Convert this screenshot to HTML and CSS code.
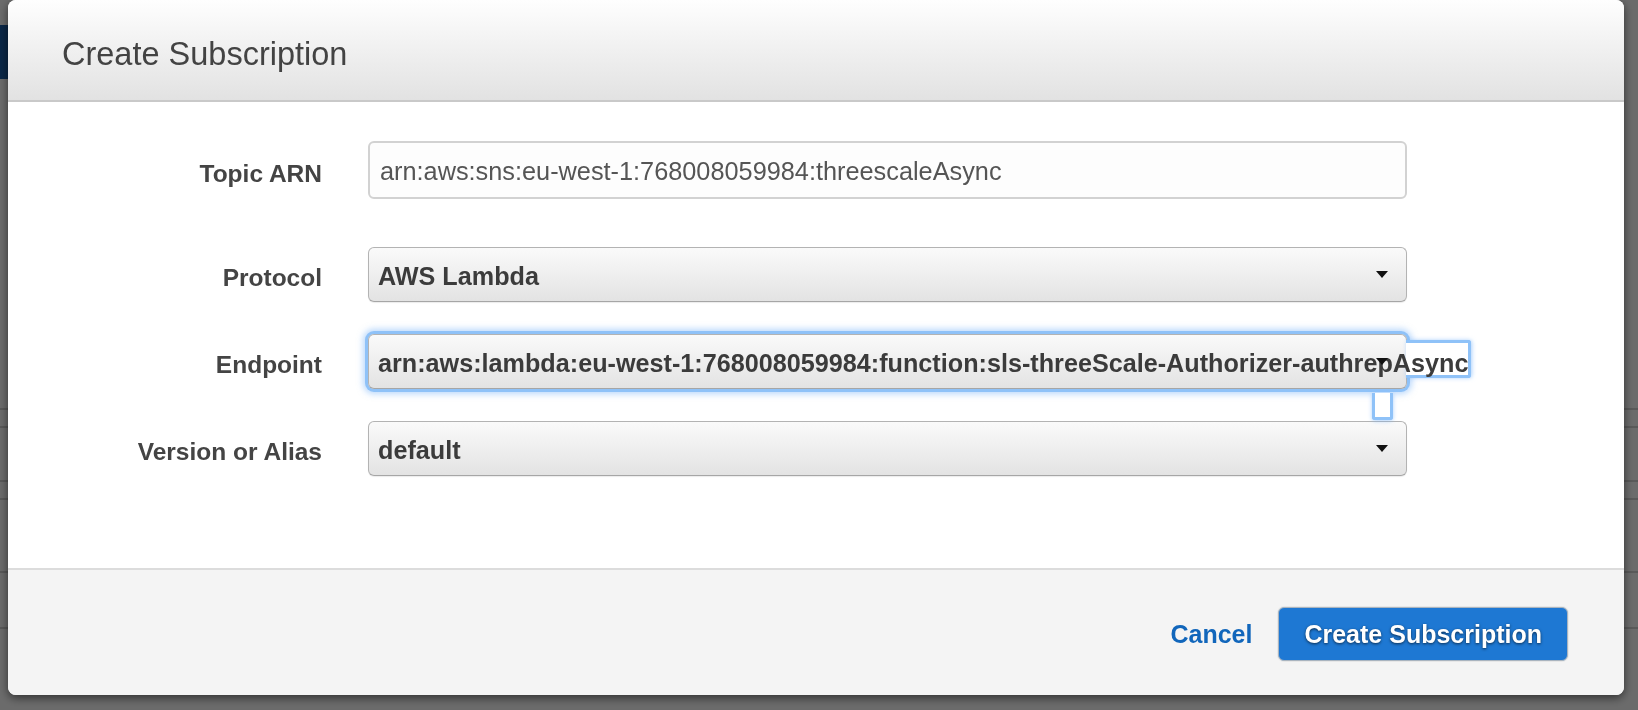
FILE: index.html
```html
<!DOCTYPE html>
<html>
<head>
<meta charset="utf-8">
<title>Create Subscription</title>
<link rel="stylesheet" href="styles.css">
</head>
<body>
<div class="page">
  <div class="page-bar"></div>
  <div class="page-line l1"></div>
  <div class="page-line l2"></div>
  <div class="page-line l3"></div>
  <div class="page-line l4"></div>
  <div class="page-line l5"></div>
  <div class="page-line l6"></div>
</div>
<div class="overlay"></div>
<div class="modal">
  <div class="modal-header">
    <h1 class="modal-title">Create Subscription</h1>
  </div>
  <div class="modal-body">
    <div class="row row-topic">
      <div class="label">Topic ARN</div>
      <div class="input">arn:aws:sns:eu-west-1:768008059984:threescaleAsync</div>
    </div>
    <div class="row row-protocol">
      <div class="label">Protocol</div>
      <div class="select"><span class="select-text">AWS Lambda</span><span class="caret"></span></div>
    </div>
    <div class="row row-endpoint">
      <div class="label">Endpoint</div>
      <div class="select focused"><span class="select-text">arn:aws:lambda:eu-west-1:768008059984:function:sls-threeScale-Authorizer-authrepAsync</span><span class="caret"></span><span class="spill"></span><span class="tab"></span></div>
    </div>
    <div class="row row-version">
      <div class="label">Version or Alias</div>
      <div class="select"><span class="select-text">default</span><span class="caret"></span></div>
    </div>
  </div>
  <div class="modal-footer">
    <a class="cancel">Cancel</a>
    <button class="primary">Create Subscription</button>
  </div>
</div>
</body>
</html>
```

FILE: styles.css
```css
html, body {
  margin: 0;
  padding: 0;
  width: 1638px;
  height: 710px;
  overflow: hidden;
  font-family: "Liberation Sans", Arial, Helvetica, sans-serif;
  background: #ffffff;
}

.page {
  padding-top: 25px;
}
.page-bar {
  width: 300px;
  height: 54px;
  background: #1a5da8;
}
.page-line {
  height: 2px;
  background: #d4d4d4;
}
.l1 { margin-top: 329px; }
.l2 { margin-top: 16px; }
.l3 { margin-top: 52px; }
.l4 { margin-top: 16px; }
.l5 { margin-top: 71px; }
.l6 { margin-top: 54px; }

.overlay {
  position: fixed;
  inset: 0;
  background: rgba(0, 0, 0, 0.58);
}

.modal {
  position: fixed;
  left: 8px;
  top: 0;
  width: 1616px;
  height: 695px;
  border-radius: 8px;
  background: #ffffff;
  box-shadow: 0 3px 10px rgba(0, 0, 0, 0.55);
  display: flex;
  flex-direction: column;
}

.modal-header {
  height: 102px;
  box-sizing: border-box;
  padding: 36px 0 0 54px;
  border-radius: 8px 8px 0 0;
  background: linear-gradient(#fefefe, #e2e2e2);
  border-bottom: 2px solid #c9c9c9;
  flex: none;
}
.modal-title {
  margin: 0;
  font-size: 32.5px;
  line-height: 36px;
  font-weight: normal;
  color: #434343;
}

.modal-body {
  flex: none;
  height: 468px;
  box-sizing: border-box;
  padding-top: 39px;
  border-bottom: 2px solid #dcdcdc;
  display: flex;
  flex-direction: column;
}

.row {
  display: flex;
  align-items: center;
  gap: 46px;
}
.row-protocol { margin-top: 48px; }
.row-endpoint { margin-top: 32px; }
.row-version { margin-top: 32px; }

.label {
  width: 314px;
  flex: none;
  text-align: right;
  font-size: 24.5px;
  line-height: 28px;
  font-weight: bold;
  color: #444444;
  padding-top: 7px;
}

.input {
  width: 1039px;
  height: 58px;
  box-sizing: border-box;
  border: 2px solid #d2d2d2;
  border-radius: 6px;
  background: #fdfdfd;
  padding-left: 10px;
  font-size: 25.3px;
  line-height: 56px;
  color: #555555;
  white-space: nowrap;
}

.select {
  position: relative;
  width: 1039px;
  height: 55px;
  box-sizing: border-box;
  border: 1px solid #b3b3b3;
  border-bottom-color: #a6a6a6;
  border-radius: 6px;
  background: linear-gradient(#fafafa, #e3e3e3);
  box-shadow: 0 1px 1px rgba(0, 0, 0, 0.08);
  padding-left: 9px;
  display: flex;
  align-items: center;
  white-space: nowrap;
}
.select-text {
  position: relative;
  z-index: 2;
  font-size: 25.2px;
  line-height: 29px;
  font-weight: bold;
  color: #3b3b3b;
  padding-top: 4px;
}
.caret {
  position: absolute;
  z-index: 3;
  right: 18px;
  top: 23px;
  width: 0;
  height: 0;
  border-left: 6.5px solid transparent;
  border-right: 6.5px solid transparent;
  border-top: 7px solid #111111;
}

.select.focused {
  box-shadow: 0 0 0 3px #8fc2f8, 0 0 6px 5px rgba(120, 180, 250, 0.5);
}
.spill {
  position: absolute;
  z-index: 1;
  left: 100%;
  top: 5px;
  width: 65px;
  height: 38px;
  box-sizing: border-box;
  background: #ffffff;
  border: 3px solid #8fc2f8;
  border-left: 0;
  border-radius: 0 3px 3px 0;
  box-shadow: 1px 0 4px rgba(120, 180, 250, 0.6);
}
.tab {
  position: absolute;
  z-index: 1;
  left: 1003px;
  top: 58px;
  width: 21px;
  height: 27px;
  box-sizing: border-box;
  background: #ffffff;
  border: 3px solid #8fc2f8;
  border-top: 0;
  border-radius: 0 0 3px 3px;
  box-shadow: 0 1px 4px rgba(120, 180, 250, 0.6);
}

.modal-footer {
  flex: 1;
  background: #f4f4f4;
  border-radius: 0 0 8px 8px;
  display: flex;
  align-items: center;
  justify-content: flex-end;
  padding-right: 56px;
  padding-top: 3px;
  gap: 26px;
}
.cancel {
  font-size: 25px;
  font-weight: bold;
  color: #1166bb;
  cursor: pointer;
}
.primary {
  height: 54px;
  padding: 0 25px;
  border: 1px solid #a9b4bf;
  border-radius: 6px;
  background: #1e78d3;
  color: #ffffff;
  font-family: "Liberation Sans", Arial, Helvetica, sans-serif;
  font-size: 25px;
  font-weight: bold;
  text-shadow: 0 1px 3px rgba(0, 0, 0, 0.65);
  box-shadow: 0 0 0 1px rgba(0, 0, 0, 0.05);
}
```
